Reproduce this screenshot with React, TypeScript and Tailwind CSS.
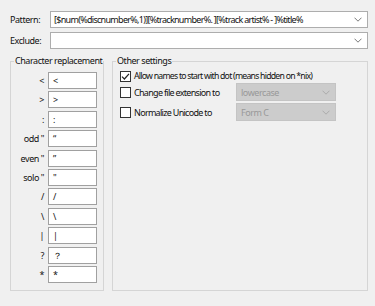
import React from "react";

const Chevron = ({ color = "#7a7a7a" }: { color?: string }) => (
  <svg width="8" height="5" viewBox="0 0 8 5" fill="none">
    <path d="M0.5 0.7 L4 4.2 L7.5 0.7" stroke={color} strokeWidth="1" />
  </svg>
);

const Check = () => (
  <svg width="9" height="9" viewBox="0 0 9 9" fill="none">
    <path d="M1 4.6 L3.4 7 L8 1.8" stroke="#222" strokeWidth="1.2" />
  </svg>
);

const rows: [string, string][] = [
  ["<", "<"],
  [">", ">"],
  [":", ":"],
  ['odd "', "\u201C"],
  ['even "', "\u201D"],
  ['solo "', '"'],
  ["/", "/"],
  ["\\", "\\"],
  ["|", "|"],
  ["?", "\uFF1F"],
  ["*", "*"],
];

function CheckRow({ checked, label, tight }: { checked?: boolean; label: string; tight?: boolean }) {
  return (
    <div className="flex items-center gap-[3px] whitespace-nowrap">
      <div className="w-[11px] h-[11px] border border-[#333] bg-white flex items-center justify-center shrink-0">
        {checked && <Check />}
      </div>
      <span className={tight ? "text-[8.7px] tracking-[-0.75px]" : ""}>{label}</span>
    </div>
  );
}

function Disabled({ text }: { text: string }) {
  return (
    <div className="w-[100px] h-[18px] bg-[#cccccc] border border-[#c4c4c4] flex items-center justify-between pl-[4px] pr-[5px] text-[#989898] tracking-[-0.45px]">
      <span>{text}</span>
      <Chevron color="#ababab" />
    </div>
  );
}

export default function App() {
  return (
    <div
      className="w-[375px] h-[306px] bg-[#f0f0f0] text-[#111] text-[9px] tracking-[-0.45px] leading-none pt-[11px] pl-[10px] pr-[7px] overflow-hidden whitespace-nowrap"
      style={{ fontFamily: '"Noto Sans", "Open Sans", sans-serif' }}
    >
      <div className="flex items-center h-[17px]">
        <div className="w-[40px]">Pattern:</div>
        <div className="flex-1 h-full bg-white border border-[#adadad] flex items-center justify-between pl-[3px] pr-[5px]">
          <span className="tracking-[-0.7px]">[$num(%discnumber%,1)][%tracknumber%. ][%track artist% - ]%title%</span>
          <Chevron />
        </div>
      </div>
      <div className="flex items-center h-[17px] mt-[4px]">
        <div className="w-[40px]">Exclude:</div>
        <div className="flex-1 h-full bg-white border border-[#adadad] flex items-center justify-end pr-[5px]">
          <Chevron />
        </div>
      </div>
      <div className="flex mt-[6px] gap-[8px]">
        <fieldset className="w-[94px] min-w-0 shrink-0 h-[236px] border border-[#d5d5d5] pl-[6px] pt-[5px]">
          <legend className="ml-[-3px] px-[1px] leading-[12px]">Character replacement</legend>
          <div className="flex flex-col gap-[2.4px]">
            {rows.map(([l, v]) => (
              <div key={l} className="flex items-center h-[17px]">
                <div className="w-[31px] text-right pr-[4px]">{l}</div>
                <div className="w-[49px] h-[17px] bg-white border border-[#a0a0a0] flex items-center pl-[4px]">
                  {v}
                </div>
              </div>
            ))}
          </div>
        </fieldset>
        <fieldset className="flex-1 min-w-0 h-[236px] border border-[#d5d5d5] pl-[7px] pt-[4px]">
          <legend className="ml-[-4px] px-[1px] leading-[12px]">Other settings</legend>
          <div className="flex flex-col tracking-[-0.7px]">
            <CheckRow checked tight label="Allow names to start with dot (means hidden on *nix)" />
            <div className="flex items-center mt-[1px] h-[18px]">
              <div className="w-[116px]">
                <CheckRow label="Change file extension to" />
              </div>
              <Disabled text="lowercase" />
            </div>
            <div className="flex items-center mt-[2px] h-[18px]">
              <div className="w-[116px]">
                <CheckRow label="Normalize Unicode to" />
              </div>
              <Disabled text="Form C" />
            </div>
          </div>
        </fieldset>
      </div>
    </div>
  );
}
